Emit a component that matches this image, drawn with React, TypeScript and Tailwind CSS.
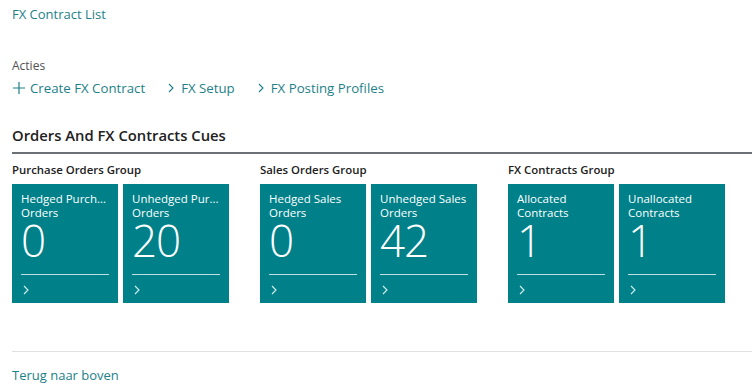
const groups = [
  {
    title: "Purchase Orders Group",
    cues: [
      { label: "Hedged Purch... Orders", l1: "Hedged Purch...", l2: "Orders", value: "0" },
      { label: "Unhedged Pur... Orders", l1: "Unhedged Pur...", l2: "Orders", value: "20" },
    ],
  },
  {
    title: "Sales Orders Group",
    cues: [
      { label: "Hedged Sales Orders", l1: "Hedged Sales", l2: "Orders", value: "0" },
      { label: "Unhedged Sales Orders", l1: "Unhedged Sales", l2: "Orders", value: "42" },
    ],
  },
  {
    title: "FX Contracts Group",
    cues: [
      { label: "Allocated Contracts", l1: "Allocated", l2: "Contracts", value: "1" },
      { label: "Unallocated Contracts", l1: "Unallocated", l2: "Contracts", value: "1" },
    ],
  },
];

function Chevron({ className }: { className?: string }) {
  return (
    <svg className={className} width="8" height="10" viewBox="0 0 8 10" fill="none">
      <path d="M2 1l4 4-4 4" stroke="currentColor" strokeWidth="1.1" />
    </svg>
  );
}

function Cue({ l1, l2, value }: { l1: string; l2: string; value: string }) {
  return (
    <div className="w-[106px] h-[119px] bg-[#008189] text-white px-[9px] pt-[8px] flex flex-col">
      <div className="text-[11.5px] leading-[14px]">
        <div className="whitespace-nowrap">{l1}</div>
        <div>{l2}</div>
      </div>
      <div className="text-[44px] leading-[40px] font-light tracking-[-1px]">{value}</div>
      <div className="border-t border-[#b8dfe2] mt-[14px]" />
      <Chevron className="mt-[10px] ml-[1px] text-[#d8eff1]" />
    </div>
  );
}

export default function App() {
  return (
    <div
      className="w-[752px] h-[392px] bg-white overflow-hidden pl-[12px] text-[#212121]"
      style={{ fontFamily: '"Open Sans", "Noto Sans", sans-serif' }}
    >
      <div className="pt-[4px] text-[13px] leading-[20px] text-[#1d7f89]">FX Contract List</div>

      {/* acties */}
      <div className="mt-[34px] text-[12px] leading-[16px] text-[#505050]">Acties</div>
      <div className="mt-[5px] flex items-center text-[13.25px] leading-[18px] text-[#1d7f89]">
        <span className="flex items-center">
          <svg width="14" height="14" viewBox="0 0 14 14" className="mr-[4px]">
            <path d="M7 1v12M1 7h12" stroke="currentColor" strokeWidth="1.2" />
          </svg>
          Create FX Contract
        </span>
        <span className="flex items-center ml-[22px]">
          <Chevron className="mr-[6px]" />
          FX Setup
        </span>
        <span className="flex items-center ml-[22px]">
          <Chevron className="mr-[6px]" />
          FX Posting Profiles
        </span>
      </div>

      {/* cues */}
      <div className="mt-[28px] text-[14.8px] leading-[20px] font-semibold text-[#212121]">
        Orders And FX Contracts Cues
      </div>
      <div className="mt-[7px] border-t-2 border-[#6b6f76]" />
      <div className="mt-[8px] flex gap-[31px]">
        {groups.map((g) => (
          <div key={g.title}>
            <div className="text-[11.4px] leading-[16px] font-semibold whitespace-nowrap">{g.title}</div>
            <div className="mt-[6px] flex gap-[5px]">
              {g.cues.map((c) => (
                <Cue key={c.label} l1={c.l1} l2={c.l2} value={c.value} />
              ))}
            </div>
          </div>
        ))}
      </div>

      {/* footer */}
      <div className="mt-[48px] border-t border-[#e1e1e1]" />
      <div className="mt-[14px] text-[13px] leading-[18px] text-[#1d7f89]">Terug naar boven</div>
    </div>
  );
}
